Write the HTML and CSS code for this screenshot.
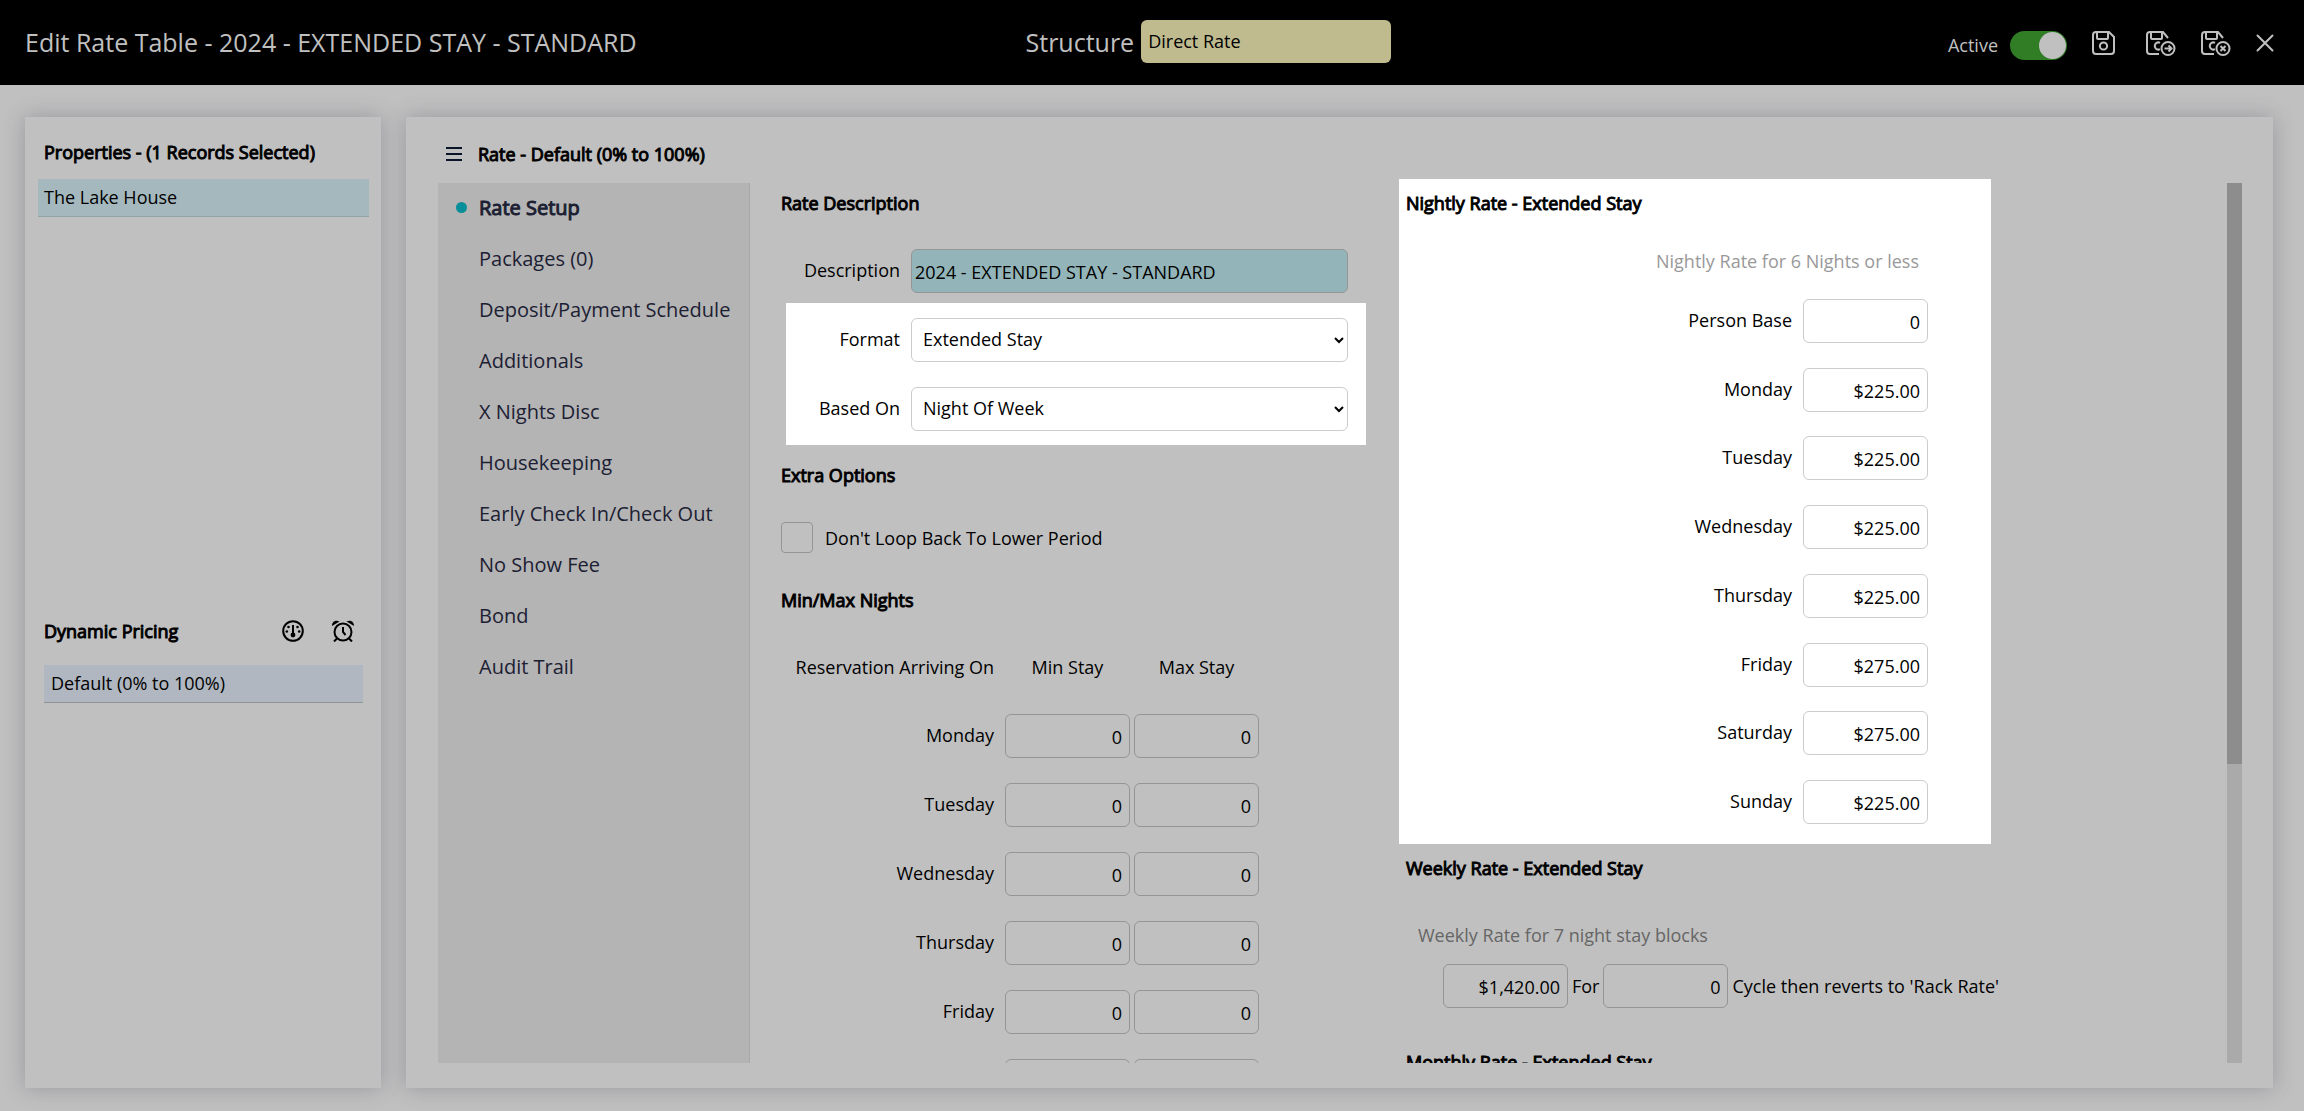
FILE: index.html
```html
<!DOCTYPE html>
<html lang="en">
<head>
    <meta charset="UTF-8">
    <meta name="viewport" content="width=device-width, initial-scale=1.0">
    <title>Edit Rate Table</title>
    <link rel="stylesheet" href="styles.css">
</head>
<body>
    <header class="top-bar">
        <h1>Edit Rate Table - 2024 - EXTENDED STAY - STANDARD</h1>
        <div class="structure">
            <label for="structure">Structure</label>
            <input type="text" id="structure" value="Direct Rate" readonly>
        </div>
        <div class="top-actions">
            <div class="active-switch">
                <label for="active">Active</label>
                <input type="checkbox" id="active" class="toggle" checked>
            </div>
            <button class="icon-button save-button" aria-label="Save">
                <svg width="23" height="24" viewBox="0 0 23 24">
                    <path d="M4 1h13l5 5v14a3 3 0 0 1-3 3H4a3 3 0 0 1-3-3V4a3 3 0 0 1 3-3z"/>
                    <path d="M5 1v6a1 1 0 0 0 1 1h9a1 1 0 0 0 1-1V1"/>
                    <circle cx="11.500" cy="15" r="3.600"/>
                </svg>
            </button>
            <button class="icon-button" aria-label="Save and continue">
                <svg width="30" height="25" viewBox="0 0 30 25">
                    <path d="M13 23H4a3 3 0 0 1-3-3V4a3 3 0 0 1 3-3h13l5 6"/>
                    <path d="M5 1v6a1 1 0 0 0 1 1h9a1 1 0 0 0 1-1V1"/>
                    <path d="M14 11.800a3.600 3.600 0 1 0 0 6.400"/>
                    <circle cx="22" cy="17.500" r="6.500"/>
                    <path d="M18.500 17.500h7M22.500 14.500l3 3-3 3"/>
                </svg>
            </button>
            <button class="icon-button" aria-label="Save and close">
                <svg width="30" height="25" viewBox="0 0 30 25">
                    <path d="M13 23H4a3 3 0 0 1-3-3V4a3 3 0 0 1 3-3h13l5 6"/>
                    <path d="M5 1v6a1 1 0 0 0 1 1h9a1 1 0 0 0 1-1V1"/>
                    <path d="M14 11.800a3.600 3.600 0 1 0 0 6.400"/>
                    <circle cx="22" cy="17.500" r="6.500"/>
                    <path d="M19.500 15l5 5M24.500 15l-5 5"/>
                </svg>
            </button>
            <button class="icon-button" aria-label="Close">
                <svg width="18" height="18" viewBox="0 0 18 18">
                    <path d="M1.500 1.500l15 15M16.500 1.500l-15 15" stroke-linecap="round"/>
                </svg>
            </button>
        </div>
    </header>

    <main class="page">
        <aside class="panel side-panel">
            <section class="properties">
                <h2>Properties - (1 Records Selected)</h2>
                <div class="property-row">The Lake House</div>
            </section>
            <section class="pricing">
                <div class="pricing-header">
                    <h2>Dynamic Pricing</h2>
                    <button class="icon-button" aria-label="Occupancy">
                        <svg width="22" height="22" viewBox="0 0 22 22">
                            <circle cx="11" cy="11" r="9.800"/>
                            <path d="M11 5v9"/>
                            <g class="solid">
                                <circle cx="11" cy="15" r="2.400"/>
                                <circle cx="6.500" cy="7" r="1.300"/>
                                <circle cx="15.500" cy="7" r="1.300"/>
                                <circle cx="4.800" cy="11.500" r="1.300"/>
                                <circle cx="17.200" cy="11.500" r="1.300"/>
                            </g>
                        </svg>
                    </button>
                    <button class="icon-button" aria-label="Lead time">
                        <svg width="22" height="22" viewBox="0 0 22 22">
                            <circle cx="11" cy="12" r="8.500"/>
                            <path d="M11 7v5l2.500 3M5 18.500l-3 3M17 18.500l3 3"/>
                            <path class="solid" d="M0 6C0 2 3-.500 7.500 1.500zM22 6C22 2 19-.500 14.500 1.500z"/>
                        </svg>
                    </button>
                </div>
                <div class="pricing-row">Default (0% to 100%)</div>
            </section>
        </aside>

        <section class="panel rate-panel">
            <div class="rate-header">
                <button class="icon-button" aria-label="Menu">
                    <svg width="16" height="14" viewBox="0 0 16 14">
                        <path d="M0 1h16M0 7h16M0 13h16"/>
                    </svg>
                </button>
                <h2>Rate - Default (0% to 100%)</h2>
            </div>

            <div class="rate-body">
                <nav class="rate-nav">
                    <a href="#" class="current">Rate Setup</a>
                    <a href="#">Packages (0)</a>
                    <a href="#">Deposit/Payment Schedule</a>
                    <a href="#">Additionals</a>
                    <a href="#">X Nights Disc</a>
                    <a href="#">Housekeeping</a>
                    <a href="#">Early Check In/Check Out</a>
                    <a href="#">No Show Fee</a>
                    <a href="#">Bond</a>
                    <a href="#">Audit Trail</a>
                </nav>

                <div class="rate-form">
                    <div class="column">
                        <h2>Rate Description</h2>
                        <div class="field">
                            <label for="description">Description</label>
                            <input type="text" id="description" class="description" value="2024 - EXTENDED STAY - STANDARD">
                        </div>
                        <div class="spotlight format">
                            <div class="field">
                                <label for="format">Format</label>
                                <select id="format">
                                    <option>Extended Stay</option>
                                </select>
                            </div>
                            <div class="field">
                                <label for="basedOn">Based On</label>
                                <select id="basedOn">
                                    <option>Night Of Week</option>
                                </select>
                            </div>
                        </div>

                        <h2>Extra Options</h2>
                        <div class="check-field">
                            <input type="checkbox" id="noLoop">
                            <label for="noLoop">Don't Loop Back To Lower Period</label>
                        </div>

                        <h2>Min/Max Nights</h2>
                        <table class="nights">
                            <thead>
                                <tr><th class="day">Reservation Arriving On</th><th>Min Stay</th><th>Max Stay</th></tr>
                            </thead>
                            <tbody>
                                <tr>
                                    <th class="day">Monday</th>
                                    <td><input type="text" class="amount" aria-label="Monday min stay" value="0"></td>
                                    <td><input type="text" class="amount" aria-label="Monday max stay" value="0"></td>
                                </tr>
                                <tr>
                                    <th class="day">Tuesday</th>
                                    <td><input type="text" class="amount" aria-label="Tuesday min stay" value="0"></td>
                                    <td><input type="text" class="amount" aria-label="Tuesday max stay" value="0"></td>
                                </tr>
                                <tr>
                                    <th class="day">Wednesday</th>
                                    <td><input type="text" class="amount" aria-label="Wednesday min stay" value="0"></td>
                                    <td><input type="text" class="amount" aria-label="Wednesday max stay" value="0"></td>
                                </tr>
                                <tr>
                                    <th class="day">Thursday</th>
                                    <td><input type="text" class="amount" aria-label="Thursday min stay" value="0"></td>
                                    <td><input type="text" class="amount" aria-label="Thursday max stay" value="0"></td>
                                </tr>
                                <tr>
                                    <th class="day">Friday</th>
                                    <td><input type="text" class="amount" aria-label="Friday min stay" value="0"></td>
                                    <td><input type="text" class="amount" aria-label="Friday max stay" value="0"></td>
                                </tr>
                                <tr>
                                    <th class="day">Saturday</th>
                                    <td><input type="text" class="amount" aria-label="Saturday min stay" value="0"></td>
                                    <td><input type="text" class="amount" aria-label="Saturday max stay" value="0"></td>
                                </tr>
                            </tbody>
                        </table>
                    </div>

                    <div class="column">
                        <section class="spotlight nightly">
                            <h2>Nightly Rate - Extended Stay</h2>
                            <p class="hint">Nightly Rate for 6 Nights or less</p>
                            <div class="night-rates">
                                <div class="field"><label for="base">Person Base</label><input type="text" id="base" class="amount" value="0"></div>
                                <div class="field"><label for="mon">Monday</label><input type="text" id="mon" class="amount" value="$225.00"></div>
                                <div class="field"><label for="tue">Tuesday</label><input type="text" id="tue" class="amount" value="$225.00"></div>
                                <div class="field"><label for="wed">Wednesday</label><input type="text" id="wed" class="amount" value="$225.00"></div>
                                <div class="field"><label for="thu">Thursday</label><input type="text" id="thu" class="amount" value="$225.00"></div>
                                <div class="field"><label for="fri">Friday</label><input type="text" id="fri" class="amount" value="$275.00"></div>
                                <div class="field"><label for="sat">Saturday</label><input type="text" id="sat" class="amount" value="$275.00"></div>
                                <div class="field"><label for="sun">Sunday</label><input type="text" id="sun" class="amount" value="$225.00"></div>
                            </div>
                        </section>

                        <section class="weekly">
                            <h2>Weekly Rate - Extended Stay</h2>
                            <p class="hint">Weekly Rate for 7 night stay blocks</p>
                            <div class="cycle">
                                <input type="text" class="amount" aria-label="Weekly rate" value="$1,420.00">
                                <label for="cycle">For</label>
                                <input type="text" id="cycle" class="amount" value="0">
                                <span>Cycle then reverts to 'Rack Rate'</span>
                            </div>
                        </section>

                        <section class="monthly">
                            <h2>Monthly Rate - Extended Stay</h2>
                        </section>
                    </div>
                </div>

                <div class="scroll-track"><div class="scroll-thumb"></div></div>
            </div>
        </section>
    </main>
</body>
</html>
```
FILE: styles.css
```css
* {
    box-sizing: border-box;
}
body {
    margin: 0;
    height: 100vh;
    display: flex;
    flex-direction: column;
    overflow: hidden;
    background-color: #c0c0c0;
    color: #000;
    font-family: "Open Sans", sans-serif;
    font-size: 18px;
    line-height: 24px;
}
h1, h2, p {
    margin: 0;
}
h2 {
    font-size: 18px;
    font-weight: 400;
    -webkit-text-stroke: 1px #000;
}
input, select {
    height: 44px;
    margin: 0;
    padding: 2px 3px 0;
    border: 1px solid #959595;
    border-radius: 6px;
    background-color: transparent;
    color: #000;
    font: inherit;
}
select {
    padding: 0 7px 2px;
}
svg {
    display: block;
    fill: none;
    stroke: currentColor;
    stroke-width: 2;
}
.solid {
    fill: currentColor;
    stroke: none;
}
.icon-button {
    padding: 0;
    border: none;
    background: none;
    color: inherit;
    cursor: pointer;
}

/* Top bar */
.top-bar {
    flex: none;
    height: 85px;
    display: grid;
    grid-template-columns: 17fr auto 15fr;
    align-items: center;
    padding: 0 30px 2px 25px;
    background-color: #000;
    color: #c0c0c0;
}
h1 {
    font-size: 25px;
    font-weight: 400;
    line-height: 36px;
}
.structure {
    display: flex;
    align-items: center;
    gap: 7px;
    font-size: 25px;
}
.structure input {
    width: 250px;
    height: 43px;
    padding: 0 7px 2px;
    border: none;
    background-color: #bfbb8f;
    font-size: 18px;
}
.top-actions {
    display: flex;
    align-items: center;
    justify-content: flex-end;
    gap: 25px;
    padding-top: 3px;
}
.active-switch {
    display: flex;
    align-items: center;
    gap: 12px;
    padding-top: 4px;
}
.toggle {
    appearance: none;
    width: 57px;
    height: 29px;
    padding: 1px;
    border: none;
    border-radius: 15px;
    background-color: #307d26;
}
.toggle::before {
    content: "";
    display: block;
    width: 27px;
    height: 27px;
    margin-left: auto;
    border-radius: 50%;
    background-color: #c0c0c0;
}
.save-button {
    margin-right: 6px;
}

/* Panels */
.page {
    flex: 1;
    min-height: 0;
    display: flex;
    gap: 25px;
    padding: 32px 31px 23px 25px;
}
.panel {
    background-color: #c0c0c0;
    box-shadow: 0 0 20px rgba(60, 55, 80, 0.3);
}
.side-panel {
    width: 356px;
    display: flex;
    flex-direction: column;
}
.properties {
    flex: 15;
    padding: 0 12px 0 13px;
}
.properties h2 {
    padding: 23px 0 0 6px;
}
.property-row {
    height: 38px;
    margin-top: 15px;
    padding: 6px;
    border-bottom: 1px solid #8fa3a9;
    background-color: #a5b8be;
}
.pricing {
    flex: 14;
    padding: 0 18px 0 19px;
}
.pricing-header {
    display: flex;
    align-items: center;
    gap: 28px;
    padding-right: 9px;
}
.pricing-header h2 {
    flex: 1;
}
.pricing-row {
    height: 38px;
    margin-top: 22px;
    padding: 6px 7px;
    border-bottom: 1px solid #8f9397;
    background-color: #b0b7c0;
}
.rate-panel {
    flex: 1;
    min-width: 0;
    display: flex;
    flex-direction: column;
    padding: 0 31px 25px 32px;
}
.rate-header {
    flex: none;
    height: 66px;
    display: flex;
    align-items: center;
    gap: 16px;
    padding: 8px 8px 0;
}
.rate-header .icon-button {
    color: #0a1428;
}
.rate-body {
    flex: 1;
    min-height: 0;
    display: flex;
}

/* Side navigation */
.rate-nav {
    flex: none;
    width: 312px;
    display: flex;
    flex-direction: column;
    border-right: 1px solid #a8a8a8;
    background-color: #b4b4b4;
}
.rate-nav a {
    display: flex;
    align-items: center;
    height: 51px;
    padding: 0 0 2px 41px;
    color: #1c2033;
    font-size: 20px;
    text-decoration: none;
}
.rate-nav .current {
    padding-left: 18px;
    -webkit-text-stroke: 1px #1c2033;
}
.rate-nav .current::before {
    content: "";
    width: 11px;
    height: 11px;
    margin-right: 12px;
    border-radius: 50%;
    background-color: #088f99;
}

/* Form */
.rate-form {
    flex: 1;
    min-width: 0;
    display: grid;
    grid-template-columns: 625px 1fr;
    margin-top: -4px;
    padding-left: 31px;
    overflow: hidden;
}
.column {
    padding-top: 12px;
}
.column + .column {
    margin-left: -7px;
    padding-top: 0;
}
.spotlight {
    background-color: #fff;
}
.spotlight input,
.spotlight select {
    border-color: #ccc;
}
.field {
    display: flex;
    align-items: center;
    gap: 11px;
}
.column > .field {
    margin: 34px 0 10px;
}
.field label {
    width: 119px;
    padding-bottom: 2px;
    text-align: right;
}
.field select,
.field .description {
    width: 437px;
}
.description {
    background-color: #93b5b9;
}
.format {
    width: 580px;
    display: grid;
    gap: 25px;
    margin: 0 0 18px 5px;
    padding: 15px 0 14px;
}
.format label {
    width: 114px;
}
.check-field {
    display: flex;
    align-items: center;
    gap: 12px;
    margin: 35px 0;
}
.check-field input {
    appearance: none;
    width: 32px;
    height: 31px;
    border-radius: 4px;
}
.amount {
    width: 125px;
    padding-right: 7px;
    text-align: right;
}
.nights {
    border-spacing: 4px 25px;
}
.nights th {
    padding: 0 0 2px;
    font-weight: 400;
}
.nights thead th {
    height: 52px;
    padding-bottom: 10px;
    vertical-align: bottom;
}
.nights td {
    padding: 0;
}
.nights input {
    display: block;
}
.nights .day {
    width: 216px;
    padding-right: 7px;
    text-align: right;
}
.hint {
    color: #999;
}
.nightly {
    width: 592px;
    padding: 12px 63px 20px 7px;
}
.nightly .hint {
    margin: 34px 9px 26px 0;
    text-align: right;
}
.night-rates {
    height: 525px;
    display: flex;
    flex-direction: column;
    justify-content: space-between;
}
.night-rates .field {
    justify-content: flex-end;
}
.weekly {
    padding: 12px 0 0 7px;
}
.weekly .hint {
    margin: 43px 0 17px 12px;
    color: #666;
}
.cycle {
    display: flex;
    align-items: center;
    gap: 4px;
    padding-left: 37px;
}
.monthly {
    padding: 42px 0 0 7px;
}

/* Scrollbar */
.scroll-track {
    flex: none;
    width: 15px;
    background-color: #aaa;
}
.scroll-thumb {
    height: 66%;
    background-color: #8d8d8d;
}
```
